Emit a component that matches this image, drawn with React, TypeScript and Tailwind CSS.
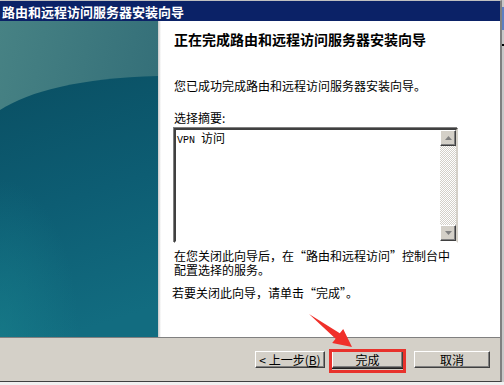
import React from 'react';

function WizardArt() {
  return (
    <svg width="158" height="316" viewBox="0 0 158 316" className="block">
      <defs>
        <linearGradient id="topLight" x1="0" y1="0" x2="1" y2="0.4">
          <stop offset="0" stopColor="#478284" />
          <stop offset="1" stopColor="#336e78" />
        </linearGradient>
        <linearGradient id="body" x1="0.2" y1="0" x2="0.4" y2="1">
          <stop offset="0" stopColor="#0a5064" />
          <stop offset="0.5" stopColor="#0d5d73" />
          <stop offset="1" stopColor="#126c80" />
        </linearGradient>
        <radialGradient id="glow" cx="0" cy="1" r="0.5">
          <stop offset="0" stopColor="#18808c" stopOpacity="0.6" />
          <stop offset="1" stopColor="#18808c" stopOpacity="0" />
        </radialGradient>
      </defs>
      <rect width="158" height="316" fill="url(#topLight)" />
      <path d="M0,89 C30,70 80,57 158,55 L158,316 L0,316 Z" fill="url(#body)" />
      <rect width="158" height="316" fill="url(#glow)" />
    </svg>
  );
}

function ScrollButton({ up }: { up?: boolean }) {
  return (
    <div className="w-[16px] h-[16px] bg-[#d4d0c8] border border-t-white border-l-white border-r-[#404040] border-b-[#404040] shadow-[inset_-1px_-1px_#808080] flex items-center justify-center">
      <svg width="7" height="4" viewBox="0 0 7 4">
        {up ? <path d="M3.5,0 L7,4 L0,4 Z" fill="#808080" /> : <path d="M0,0 L7,0 L3.5,4 Z" fill="#808080" />}
      </svg>
    </div>
  );
}

function WinButton({ children, className = '' }: { children: React.ReactNode; className?: string }) {
  return (
    <button className={`h-[17px] bg-[#d4d0c8] border border-t-white border-l-white border-r-[#404040] border-b-[#404040] shadow-[inset_-1px_-1px_#808080] text-[12px] leading-none text-black flex items-center justify-center ${className}`}>
      {children}
    </button>
  );
}

export default function App() {
  return (
    <div className="relative w-[504px] h-[385px] bg-[#f0f0f0] overflow-hidden font-['Noto_Sans_CJK_SC',sans-serif] text-black">
      <div className="flex h-[382px]">
        <div className="w-[502px] flex flex-col border-t border-t-[#c0c0c0] border-r-2 border-r-[#808080] border-b border-b-[#404040]">
          <div className="h-[20px] bg-[#0b2267] flex items-center pl-[2px]">
            <span className="text-white text-[13px] font-bold leading-none">路由和远程访问服务器安装向导</span>
          </div>

          <div className="flex h-[316px]">
            <WizardArt />
            <div className="w-[3px] bg-gradient-to-r from-[#c8c8c8] to-white" />
            <div className="flex-1 bg-white pl-[13px] flex flex-col">
              <div className="mt-[10px] h-[16px] text-[14px] leading-[16px] font-bold whitespace-nowrap">
                正在完成路由和远程访问服务器安装向导
              </div>
              <div className="mt-[32px] h-[14px] text-[12px] leading-[14px] whitespace-nowrap">
                您已成功完成路由和远程访问服务器安装向导。
              </div>
              <div className="mt-[18px] h-[14px] text-[12px] leading-[14px]">选择摘要:</div>
              <div className="mt-[3px] w-[284px] h-[115px] flex border-2 border-t-[#404040] border-l-[#404040] border-r-[#d4d0c8] border-b-white shadow-[-1px_-1px_#808080]">
                <div className="flex-1 bg-white pl-[1px] pt-[1px] text-[12px] leading-[14px] whitespace-nowrap">
                  <span className="font-['Liberation_Mono',monospace] text-[10px]">VPN </span>
                  <span>访问</span>
                </div>
                <div className="w-[16px] flex flex-col bg-[repeating-conic-gradient(#d4d0c8_0_25%,#ffffff_0_50%)] bg-[length:2px_2px]">
                  <ScrollButton up />
                  <div className="flex-1" />
                  <ScrollButton />
                </div>
              </div>
              <div className="mt-[6px] text-[12px] leading-[14px] whitespace-nowrap">
                在您关闭此向导后，在“路由和远程访问”控制台中
                <br />
                配置选择的服务。
              </div>
              <div className="mt-[9px] -ml-[2px] text-[12px] leading-[14px] whitespace-nowrap">
                若要关闭此向导，请单击“完成”。
              </div>
            </div>
          </div>

          <div className="h-px bg-[#808080]" />

          <div className="flex-1 bg-[#d4d0c8] flex justify-end items-start pt-[13px] pr-[10px]">
            <WinButton className="w-[70px]">
              &lt; 上一步(<span className="underline">B</span>)
            </WinButton>
            <div className="relative ml-[7px]">
              <WinButton className="w-[71px] outline outline-1 outline-[#202020]">完成</WinButton>
              <div className="absolute -left-[3px] -right-[3px] -top-[2px] -bottom-[5px] border-[3px] border-[#e8322c]" />
            </div>
            <WinButton className="w-[76px] ml-[11px]">取消</WinButton>
          </div>
        </div>

        <div className="w-[2px] bg-[#c8c8c8] flex flex-col">
          <div className="h-[7px]" />
          <div className="h-[23px] bg-[#5d7fc2]" />
          <div className="h-[14px]" />
          <div className="h-[2px] bg-black" />
        </div>
      </div>

      <svg className="absolute left-[300px] top-[308px] pointer-events-none" width="60" height="45" viewBox="0 0 60 45">
        <polygon points="9,6 39.8,25.2 43.2,20.9 52,39 32.2,35.1 35.6,30.8" fill="#f0302a" />
      </svg>
    </div>
  );
}
